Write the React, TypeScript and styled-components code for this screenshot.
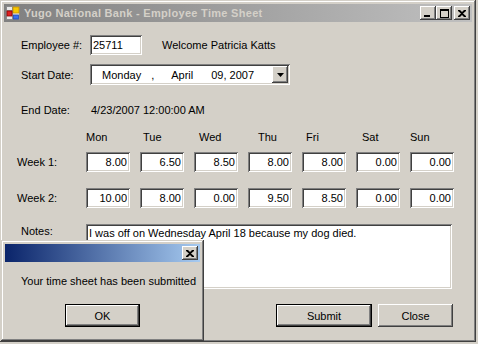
import React from "react";
import styled, { createGlobalStyle, css } from "styled-components";

const GlobalStyle = createGlobalStyle`
  html, body {
    margin: 0;
    padding: 0;
    background: #d4d0c8;
  }
  body {
    font-family: "Liberation Sans", Arial, sans-serif;
    font-size: 11px;
    color: #000;
  }
  * {
    box-sizing: border-box;
  }
`;

const raised = css`
  box-shadow: inset -1px -1px #404040, inset 1px 1px #ffffff,
    inset -2px -2px #808080, inset 2px 2px #d4d0c8;
`;

const sunken = css`
  box-shadow: inset 1px 1px #808080, inset -1px -1px #ffffff,
    inset 2px 2px #404040, inset -2px -2px #d4d0c8;
`;

const Desktop = styled.div`
  position: relative;
  width: 478px;
  height: 344px;
  overflow: hidden;
`;

const Frame = styled.div`
  display: flex;
  flex-direction: column;
  padding: 4px;
  background: #d4d0c8;
  box-shadow: inset -1px -1px #404040, inset 1px 1px #d4d0c8,
    inset -2px -2px #808080, inset 2px 2px #ffffff;
`;

const MainWindow = styled(Frame)`
  width: 476px;
  height: 342px;
`;

const MessageBox = styled(Frame)`
  position: absolute;
  left: 1px;
  top: 240px;
  width: 203px;
  height: 101px;
`;

const TitleBar = styled.div<{ $active?: boolean }>`
  display: flex;
  align-items: center;
  height: 18px;
  flex-shrink: 0;
  padding: 0 2px 0 1px;
  background: linear-gradient(
    to right,
    ${(p) => (p.$active ? "#0a246a" : "#808080")},
    ${(p) => (p.$active ? "#a6caf0" : "#c0c0c0")}
  );
  color: ${(p) => (p.$active ? "#ffffff" : "#d4d0c8")};
`;

const TitleText = styled.div`
  flex: 1;
  margin-left: 3px;
  font-weight: bold;
  font-size: 11px;
  letter-spacing: 0.3px;
  white-space: nowrap;
`;

const CaptionButtons = styled.div`
  display: flex;
  align-items: center;
  margin-left: auto;
`;

const CaptionButton = styled.div<{ $gap?: number }>`
  width: 16px;
  height: 14px;
  margin-left: ${(p) => p.$gap ?? 0}px;
  display: flex;
  align-items: center;
  justify-content: center;
  background: #d4d0c8;
  ${raised}
`;

const Client = styled.div`
  flex: 1;
  display: flex;
  flex-direction: column;
  padding: 13px 19px 0 13px;
`;

const FieldRow = styled.div<{ $top?: number; $height?: number }>`
  display: flex;
  align-items: center;
  height: ${(p) => p.$height ?? 20}px;
  margin-top: ${(p) => p.$top ?? 0}px;
`;

const Label = styled.div<{ $width?: number }>`
  width: ${(p) => p.$width ?? 73}px;
  padding-left: 4px;
  flex-shrink: 0;
  white-space: nowrap;
`;

const Text = styled.div<{ $gap?: number }>`
  margin-left: ${(p) => p.$gap ?? 0}px;
  white-space: nowrap;
`;

const TextBox = styled.input<{ $width: number; $align?: string }>`
  width: ${(p) => p.$width}px;
  height: 20px;
  margin: 0;
  border: none;
  outline: none;
  padding: 0 3px;
  font: inherit;
  color: #000;
  background: #ffffff;
  text-align: ${(p) => p.$align ?? "left"};
  ${sunken}
`;

const DatePicker = styled.div`
  width: 200px;
  height: 21px;
  display: flex;
  align-items: center;
  padding: 2px;
  background: #ffffff;
  ${sunken}
`;

const DateText = styled.div`
  flex: 1;
  display: flex;
  align-items: center;
  padding-left: 10px;
`;

const DateSegment = styled.span<{ $gap?: number }>`
  margin-left: ${(p) => p.$gap ?? 0}px;
  white-space: pre;
`;

const DropButton = styled.div`
  width: 16px;
  height: 17px;
  display: flex;
  align-items: center;
  justify-content: center;
  background: #d4d0c8;
  ${raised}
`;

const HoursGrid = styled.div`
  display: grid;
  grid-template-columns: 59px repeat(7, 44px);
  grid-template-rows: 22px 36px 20px;
  column-gap: 10px;
  align-items: start;
  margin-top: 10px;
`;

const DayHeader = styled.div<{ $shift: number }>`
  line-height: 14px;
  padding-left: ${(p) => p.$shift}px;
  white-space: nowrap;
`;

const WeekLabel = styled.div`
  line-height: 20px;
  white-space: nowrap;
`;

const NotesRow = styled.div`
  display: flex;
  align-items: flex-start;
  margin-top: 16px;
`;

const NotesLabel = styled.div`
  width: 69px;
  padding-left: 4px;
  line-height: 14px;
`;

const NotesBox = styled.textarea`
  width: 366px;
  height: 65px;
  margin: 0;
  border: none;
  outline: none;
  resize: none;
  overflow: hidden;
  padding: 2px 2px 2px 3px;
  font: inherit;
  line-height: 14px;
  color: #000;
  background: #ffffff;
  ${sunken}
`;

const ButtonRow = styled.div<{ $top: number; $center?: boolean }>`
  display: flex;
  justify-content: ${(p) => (p.$center ? "center" : "flex-end")};
  gap: 6px;
  margin-top: ${(p) => p.$top}px;
`;

const Button = styled.button<{ $width: number; $default?: boolean }>`
  width: ${(p) => p.$width}px;
  height: 23px;
  margin: 0;
  padding: 0;
  border: none;
  font: inherit;
  color: #000;
  background: #d4d0c8;
  ${(p) =>
    p.$default
      ? css`
          box-shadow: inset 0 0 0 1px #000000, inset -2px -2px #404040,
            inset 2px 2px #ffffff, inset -3px -3px #808080;
        `
      : raised}
`;

const DialogClient = styled.div`
  flex: 1;
  display: flex;
  flex-direction: column;
`;

const Message = styled.div`
  margin-top: 12px;
  padding-left: 16px;
  line-height: 14px;
  white-space: nowrap;
`;

const AppIcon = () => (
  <svg width="16" height="16" viewBox="0 0 16 16" style={{ flexShrink: 0 }}>
    <rect x="1.5" y="1.5" width="13" height="13" fill="#e8e8e8" stroke="#8c8c8c" />
    <line x1="1.5" y1="5.5" x2="14.5" y2="5.5" stroke="#8c8c8c" />
    <line x1="7.5" y1="1.5" x2="7.5" y2="14.5" stroke="#8c8c8c" />
    <rect x="8" y="2" width="6" height="6" fill="#f8c800" stroke="#c89000" strokeWidth="0.8" />
    <rect x="2" y="6" width="5" height="5" fill="#e02020" stroke="#900000" strokeWidth="0.8" />
    <rect x="8.5" y="10" width="5" height="4" fill="#3870f0" stroke="#2048b0" strokeWidth="0.8" />
  </svg>
);

const MinGlyph = () => (
  <svg width="8" height="7" viewBox="0 0 8 7">
    <rect x="0" y="5" width="6" height="2" fill="#000" />
  </svg>
);

const MaxGlyph = () => (
  <svg width="9" height="9" viewBox="0 0 9 9">
    <path d="M0 0h9v2H0z M0 0h1v9H0z M8 0h1v9H8z M0 8h9v1H0z" fill="#000" />
  </svg>
);

const CloseGlyph = () => (
  <svg width="8" height="7" viewBox="0 0 8 7">
    <path
      d="M0 0h2l2 2 2-2h2v1L5 3.5 8 6v1H6L4 5 2 7H0V6l3-2.5L0 1z"
      fill="#000"
    />
  </svg>
);

const ArrowGlyph = () => (
  <svg width="7" height="4" viewBox="0 0 7 4">
    <path d="M0 0h7L3.5 4z" fill="#000" />
  </svg>
);

const days = [
  { name: "Mon", shift: 0 },
  { name: "Tue", shift: 3 },
  { name: "Wed", shift: 5 },
  { name: "Thu", shift: 10 },
  { name: "Fri", shift: 4 },
  { name: "Sat", shift: 6 },
  { name: "Sun", shift: 0 },
];

const weeks = [
  { label: "Week 1:", hours: ["8.00", "6.50", "8.50", "8.00", "8.00", "0.00", "0.00"] },
  { label: "Week 2:", hours: ["10.00", "8.00", "0.00", "9.50", "8.50", "0.00", "0.00"] },
];

export default function App() {
  return (
    <Desktop>
      <GlobalStyle />
      <MainWindow>
        <TitleBar>
          <AppIcon />
          <TitleText>Yugo National Bank - Employee Time Sheet</TitleText>
          <CaptionButtons>
            <CaptionButton>
              <MinGlyph />
            </CaptionButton>
            <CaptionButton>
              <MaxGlyph />
            </CaptionButton>
            <CaptionButton $gap={2}>
              <CloseGlyph />
            </CaptionButton>
          </CaptionButtons>
        </TitleBar>

        <Client>
          <FieldRow>
            <Label>Employee #:</Label>
            <TextBox $width={52} defaultValue="25711" readOnly />
            <Text $gap={20}>Welcome Patricia Katts</Text>
          </FieldRow>

          <FieldRow $top={9} $height={21}>
            <Label>Start Date:</Label>
            <DatePicker>
              <DateText>
                <DateSegment>Monday</DateSegment>
                <DateSegment $gap={10}>,</DateSegment>
                <DateSegment $gap={17}>April</DateSegment>
                <DateSegment $gap={18}>09, 2007</DateSegment>
              </DateText>
              <DropButton>
                <ArrowGlyph />
              </DropButton>
            </DatePicker>
          </FieldRow>

          <FieldRow $top={15}>
            <Label>End Date:</Label>
            <Text $gap={1}>4/23/2007 12:00:00 AM</Text>
          </FieldRow>

          <HoursGrid>
            <div />
            {days.map((d) => (
              <DayHeader key={d.name} $shift={d.shift}>
                {d.name}
              </DayHeader>
            ))}
            {weeks.map((w) => (
              <React.Fragment key={w.label}>
                <WeekLabel>{w.label}</WeekLabel>
                {w.hours.map((h, i) => (
                  <TextBox key={i} $width={44} $align="right" defaultValue={h} readOnly />
                ))}
              </React.Fragment>
            ))}
          </HoursGrid>

          <NotesRow>
            <NotesLabel>Notes:</NotesLabel>
            <NotesBox
              readOnly
              defaultValue="I was off on Wednesday April 18 because my dog died."
            />
          </NotesRow>

          <ButtonRow $top={15}>
            <Button $width={96} $default>
              Submit
            </Button>
            <Button $width={75}>Close</Button>
          </ButtonRow>
        </Client>
      </MainWindow>

      <MessageBox>
        <TitleBar $active>
          <CaptionButtons>
            <CaptionButton>
              <CloseGlyph />
            </CaptionButton>
          </CaptionButtons>
        </TitleBar>
        <DialogClient>
          <Message>Your time sheet has been submitted</Message>
          <ButtonRow $top={16} $center>
            <Button $width={75} $default>
              OK
            </Button>
          </ButtonRow>
        </DialogClient>
      </MessageBox>
    </Desktop>
  );
}
